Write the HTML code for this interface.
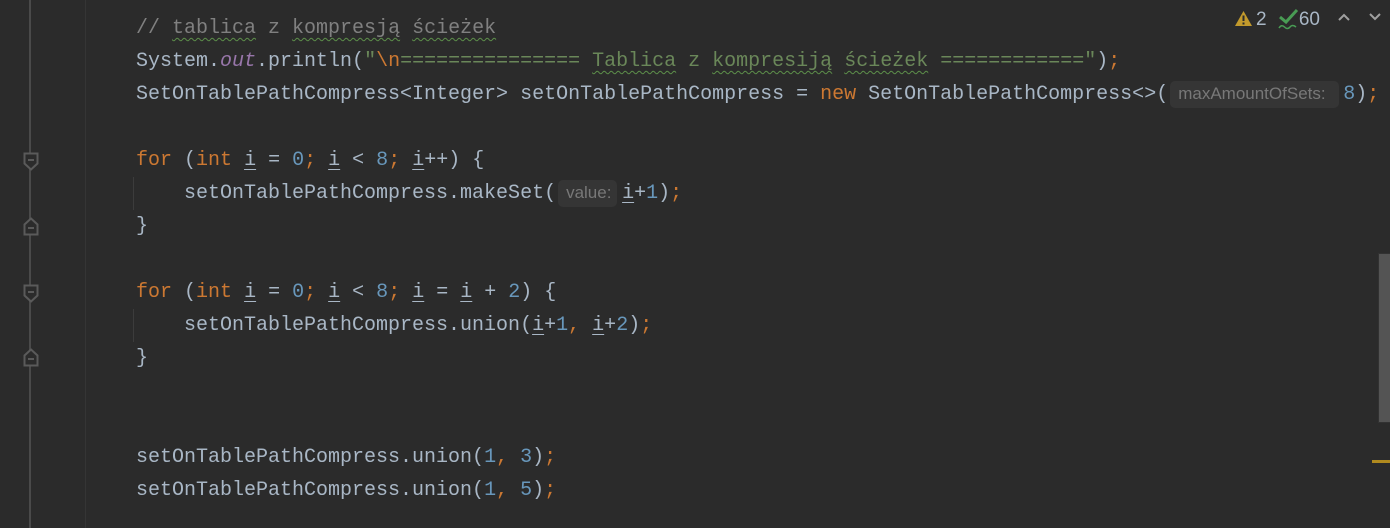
<!DOCTYPE html>
<html><head><meta charset="utf-8"><style>
html,body{margin:0;padding:0;}
body{width:1390px;height:528px;background:#2b2b2b;position:relative;overflow:hidden;font-family:"Liberation Mono","DejaVu Sans Mono",monospace;font-size:20px;color:#a9b7c6;}
.gl{position:absolute;left:29px;top:0;width:2px;height:528px;background:#4a4a4a;}
.bd{position:absolute;left:85px;top:0;width:1px;height:528px;background:#353535;}
.ln{position:absolute;left:136px;height:33px;line-height:33px;white-space:pre;}
.k{color:#cc7832}.n{color:#6897bb}.s{color:#6a8759}.c{color:#808080}.o{color:#9876aa;font-style:italic}
.u{text-decoration:underline;text-decoration-thickness:1px;text-underline-offset:4px}
.w{text-decoration:underline wavy #5d8f4a;text-decoration-thickness:1px;text-underline-offset:4px}
.h{display:inline-block;font-family:"Liberation Sans","DejaVu Sans",sans-serif;font-size:17px;color:#787878;background:#353535;border-radius:5px;height:27px;line-height:26px;vertical-align:top;box-sizing:border-box;padding-left:8px;position:relative;top:3px}
.ig{position:absolute;left:133px;width:1px;background:#3c3c3c}
.fold{position:absolute;left:23px;}
</style></head><body>
<div class="gl"></div><div class="bd"></div>
<svg class="fold" style="top:152px" width="16" height="20"><path d="M1.5 1.5H14.5V11.5L8 17.5L1.5 11.5Z" fill="#2b2b2b" stroke="#5a5a5a" stroke-width="2"/><path d="M5 8H11" stroke="#5a5a5a" stroke-width="2"/></svg>
<svg class="fold" style="top:216px" width="16" height="20"><path d="M1.5 18.5H14.5V8.5L8 2.5L1.5 8.5Z" fill="#2b2b2b" stroke="#5a5a5a" stroke-width="2"/><path d="M5 12H11" stroke="#5a5a5a" stroke-width="2"/></svg>
<svg class="fold" style="top:284px" width="16" height="20"><path d="M1.5 1.5H14.5V11.5L8 17.5L1.5 11.5Z" fill="#2b2b2b" stroke="#5a5a5a" stroke-width="2"/><path d="M5 8H11" stroke="#5a5a5a" stroke-width="2"/></svg>
<svg class="fold" style="top:347px" width="16" height="20"><path d="M1.5 18.5H14.5V8.5L8 2.5L1.5 8.5Z" fill="#2b2b2b" stroke="#5a5a5a" stroke-width="2"/><path d="M5 12H11" stroke="#5a5a5a" stroke-width="2"/></svg>
<div class="ig" style="top:177px;height:33px"></div>
<div class="ig" style="top:309px;height:33px"></div>

<div class="ln c" style="top:12px">// <span class="w">tablica</span> z <span class="w">kompresją</span> <span class="w">ścieżek</span></div>
<div class="ln" style="top:45px">System.<span class="o">out</span>.println(<span class="s">"</span><span class="k">\n</span><span class="s">=============== <span class="w">Tablica</span> z <span class="w">kompresiją</span> <span class="w">ścieżek</span> ============"</span>)<span class="k">;</span></div>
<div class="ln" style="top:78px">SetOnTablePathCompress&lt;Integer&gt; setOnTablePathCompress = <span class="k">new</span> SetOnTablePathCompress&lt;&gt;(<span class="h" style="width:169px;margin-left:2px;margin-right:4px">maxAmountOfSets:</span><span class="n">8</span>)<span class="k">;</span></div>
<div class="ln" style="top:144px"><span class="k">for</span> (<span class="k">int</span> <span class="u">i</span> = <span class="n">0</span><span class="k">;</span> <span class="u">i</span> &lt; <span class="n">8</span><span class="k">;</span> <span class="u">i</span>++) {</div>
<div class="ln" style="top:177px">    setOnTablePathCompress.makeSet(<span class="h" style="width:59px;margin-left:2px;margin-right:5px">value:</span><span class="u">i</span>+<span class="n">1</span>)<span class="k">;</span></div>
<div class="ln" style="top:210px">}</div>
<div class="ln" style="top:276px"><span class="k">for</span> (<span class="k">int</span> <span class="u">i</span> = <span class="n">0</span><span class="k">;</span> <span class="u">i</span> &lt; <span class="n">8</span><span class="k">;</span> <span class="u">i</span> = <span class="u">i</span> + <span class="n">2</span>) {</div>
<div class="ln" style="top:309px">    setOnTablePathCompress.union(<span class="u">i</span>+<span class="n">1</span><span class="k">,</span> <span class="u">i</span>+<span class="n">2</span>)<span class="k">;</span></div>
<div class="ln" style="top:342px">}</div>
<div class="ln" style="top:441px">setOnTablePathCompress.union(<span class="n">1</span><span class="k">,</span> <span class="n">3</span>)<span class="k">;</span></div>
<div class="ln" style="top:474px">setOnTablePathCompress.union(<span class="n">1</span><span class="k">,</span> <span class="n">5</span>)<span class="k">;</span></div>

<div style="position:absolute;left:1234px;top:8px;font-family:'Liberation Sans',sans-serif;font-size:19px;color:#a9b7c6;white-space:nowrap;line-height:22px">
<svg width="19" height="17" style="vertical-align:-2px"><path d="M9.5 1L18 16H1Z" fill="#c29a2c"/><rect x="8.5" y="5.5" width="2" height="5.5" fill="#2b2b2b"/><rect x="8.5" y="12.5" width="2" height="2" fill="#2b2b2b"/></svg><span style="margin-left:3px">2</span>
<svg width="22" height="22" style="vertical-align:-5px;margin-left:6px"><path d="M2 9L8 14L19 2" stroke="#499c54" stroke-width="3" fill="none"/><path d="M1 20Q3.5 16 6.5 19T12 19T18 19" stroke="#499c54" stroke-width="1.5" fill="none"/></svg><span style="margin-left:-1px">60</span>
</div>
<svg style="position:absolute;left:1337px;top:12px" width="14" height="10"><path d="M2 8L7 3L12 8" stroke="#a0a0a0" stroke-width="2" fill="none"/></svg>
<svg style="position:absolute;left:1368px;top:12px" width="14" height="10"><path d="M2 2L7 7L12 2" stroke="#a0a0a0" stroke-width="2" fill="none"/></svg>
<div style="position:absolute;left:1378px;top:253px;width:12px;height:170px;background:#323232"></div>
<div style="position:absolute;left:1379px;top:254px;width:11px;height:168px;background:#545454"></div>
<div style="position:absolute;left:1372px;top:460px;width:18px;height:3px;background:#b08a1f"></div>
</body></html>
